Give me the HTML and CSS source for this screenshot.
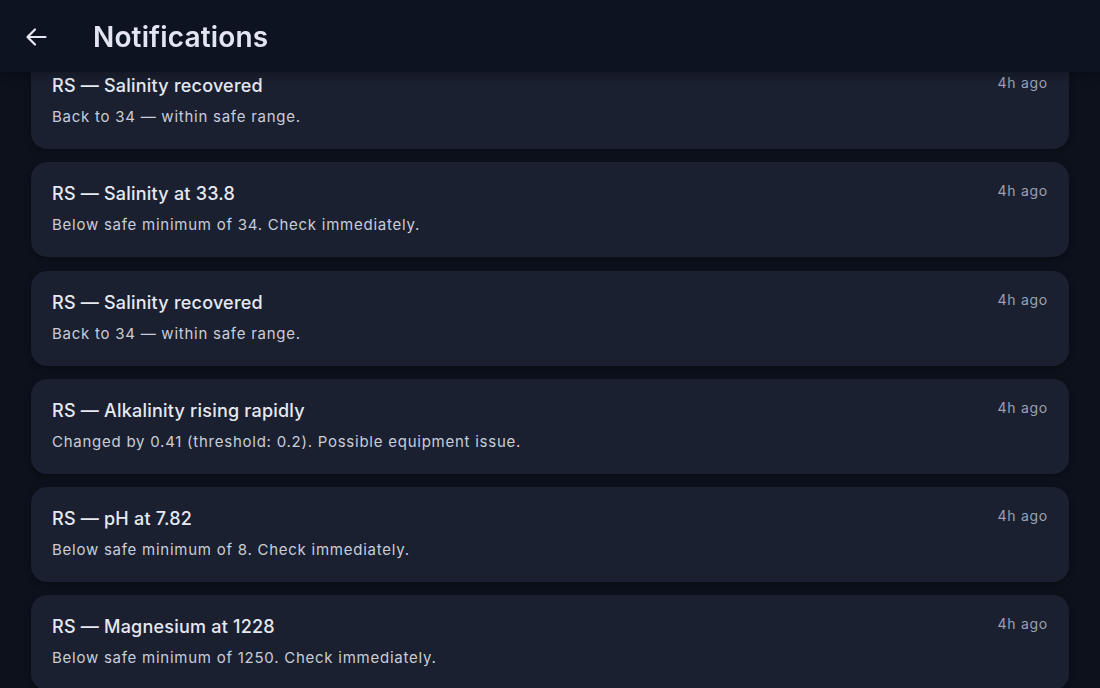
FILE: index.html
```html
<!DOCTYPE html>
<html>
<head>
<meta charset="utf-8">
<link rel="stylesheet" href="styles.css">
</head>
<body>
<header class="topbar">
  <button class="back" aria-label="Back">
    <svg width="24" height="24" viewBox="0 0 24 24"><path d="M21.5 12H3.5M11 4.5L3.5 12l7.5 7.5" fill="none" stroke="#e6e9f2" stroke-width="2.2" stroke-linecap="round" stroke-linejoin="round"/></svg>
  </button>
  <h1 class="title">Notifications</h1>
</header>
<main class="list">
  <div class="card">
    <div class="card-text">
      <div class="card-title">RS — Salinity recovered</div>
      <div class="card-body">Back to 34 — within safe range.</div>
    </div>
    <div class="card-time">4h ago</div>
  </div>
  <div class="card">
    <div class="card-text">
      <div class="card-title">RS — Salinity at 33.8</div>
      <div class="card-body">Below safe minimum of 34. Check immediately.</div>
    </div>
    <div class="card-time">4h ago</div>
  </div>
  <div class="card">
    <div class="card-text">
      <div class="card-title">RS — Salinity recovered</div>
      <div class="card-body">Back to 34 — within safe range.</div>
    </div>
    <div class="card-time">4h ago</div>
  </div>
  <div class="card">
    <div class="card-text">
      <div class="card-title">RS — Alkalinity rising rapidly</div>
      <div class="card-body">Changed by 0.41 (threshold: 0.2). Possible equipment issue.</div>
    </div>
    <div class="card-time">4h ago</div>
  </div>
  <div class="card">
    <div class="card-text">
      <div class="card-title">RS — pH at 7.82</div>
      <div class="card-body">Below safe minimum of 8. Check immediately.</div>
    </div>
    <div class="card-time">4h ago</div>
  </div>
  <div class="card">
    <div class="card-text">
      <div class="card-title">RS — Magnesium at 1228</div>
      <div class="card-body">Below safe minimum of 1250. Check immediately.</div>
    </div>
    <div class="card-time">4h ago</div>
  </div>
</main>
</body>
</html>
```
FILE: styles.css
```css
* { box-sizing: border-box; }
html, body {
  margin: 0;
  padding: 0;
  height: 100%;
  overflow: hidden;
  background: #0c111c;
  font-family: Inter, "Noto Sans", sans-serif;
  color: #e4e7ef;
}
.topbar {
  position: fixed;
  top: 0;
  left: 0;
  right: 0;
  height: 72px;
  display: flex;
  align-items: center;
  padding-left: 24px;
  padding-top: 1px;
  background: #0d1320;
  box-shadow: 0 2px 10px rgba(0,0,0,0.35);
  z-index: 10;
}
.back {
  width: 24px;
  height: 24px;
  padding: 0;
  border: 0;
  background: none;
  display: flex;
  align-items: center;
  justify-content: center;
  margin-right: 45px;
}
.title {
  margin: 0;
  font-size: 28px;
  font-weight: 600;
  color: #e3e6f2;
  letter-spacing: 0.15px;
}
.list {
  display: flex;
  flex-direction: column;
  gap: 13.3px;
  padding: 54px 31px 0 31px;
}
.card {
  height: 95px;
  flex-shrink: 0;
  border-radius: 16px;
  background: #1a2030;
  box-shadow: 0 2px 6px rgba(0,0,0,0.35);
  display: flex;
  justify-content: space-between;
  padding: 20px 21px 0 21px;
}
.card-title {
  font-size: 18px;
  font-weight: 500;
  color: #e6e9f1;
  line-height: 24px;
  letter-spacing: 0.22px;
}
.card-body {
  margin-top: 8px;
  font-size: 15px;
  color: #c9cdd8;
  letter-spacing: 0.75px;
  line-height: 22px;
}
.card-time {
  font-size: 14px;
  color: #9ba1b5;
  letter-spacing: 0.75px;
  line-height: 18px;
}
```
